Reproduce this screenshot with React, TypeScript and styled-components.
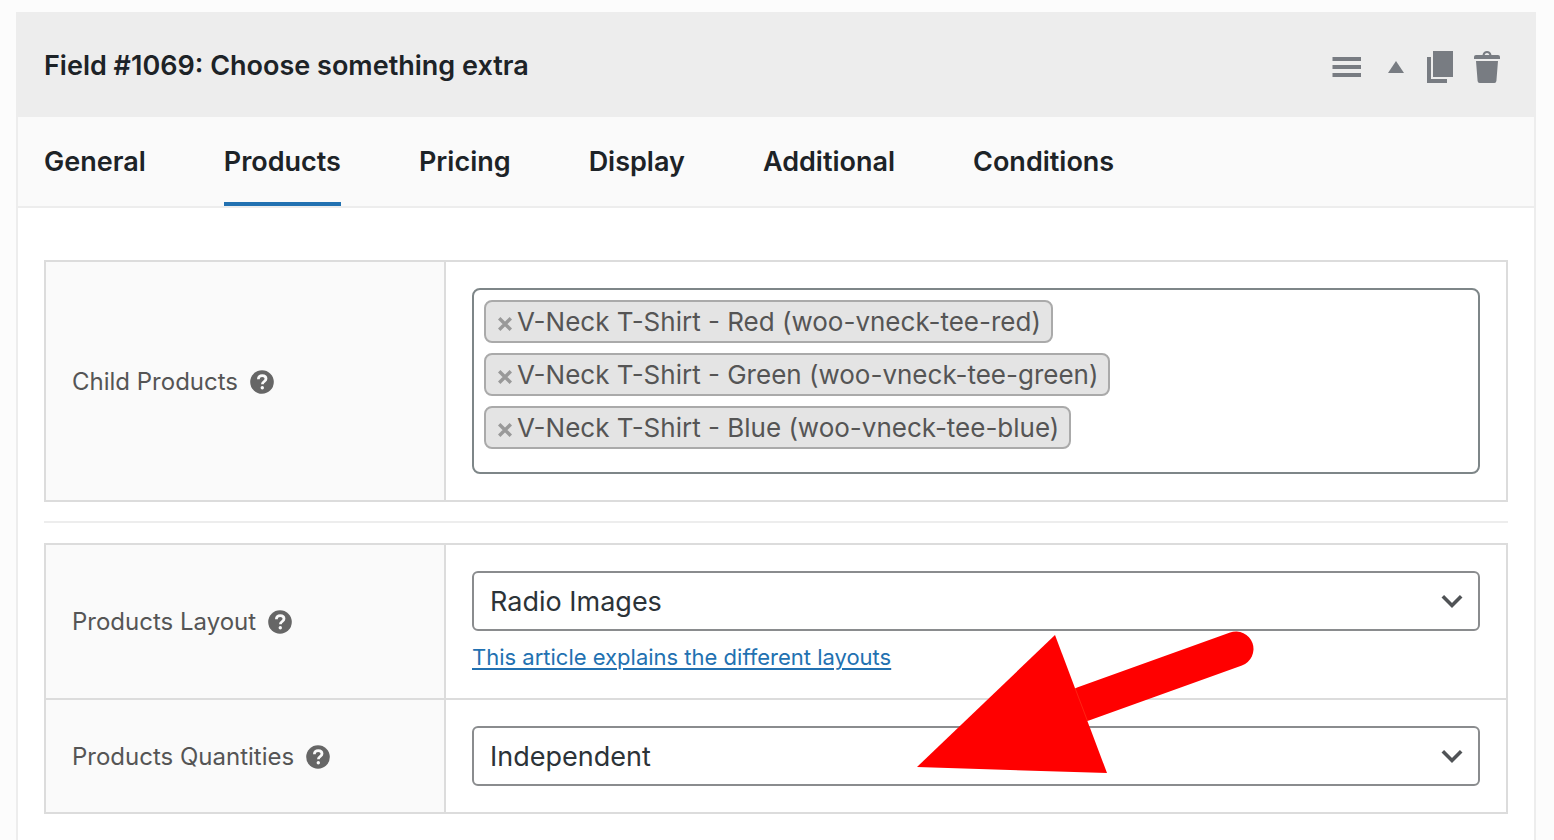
import React, { useState } from 'react';
import styled, { createGlobalStyle } from 'styled-components';

const GlobalStyle = createGlobalStyle`
  *, *::before, *::after { box-sizing: border-box; }
  body {
    margin: 0;
    background: #fcfcfc;
    color: #1d2327;
    font-family: Inter, "Liberation Sans", sans-serif;
  }
`;

const Panel = styled.section`
  display: flex;
  flex-direction: column;
  min-height: calc(100vh - 12px);
  margin: 12px 18px 0 16px;
  border: 2px solid #ededed;
  border-bottom: 0;
  background: #fff;
`;

const PanelHeader = styled.header`
  display: flex;
  align-items: center;
  justify-content: space-between;
  height: 103px;
  padding: 0 34px 0 26px;
  background: #ededed;
`;

const Title = styled.h2`
  margin: 0;
  font-size: 27px;
  line-height: 32px;
  font-weight: 600;
`;

const Actions = styled.div`
  display: flex;
  align-items: center;
  padding-top: 2px;
  color: #787c82;
`;

const IconButton = styled.button<{ $gap?: number }>`
  display: flex;
  margin: 0 0 0 ${(p) => p.$gap ?? 0}px;
  padding: 0;
  border: 0;
  background: none;
  color: inherit;
  cursor: pointer;
  svg { display: block; fill: currentColor; }
`;

const TabBar = styled.div`
  display: flex;
  gap: 78px;
  height: 91px;
  padding: 0 26px;
  border-bottom: 2px solid #ededed;
  background: #fafafa;
`;

const Tab = styled.button<{ $active: boolean }>`
  height: 89px;
  padding: 4px 0 0;
  border: 0;
  border-bottom: 4px solid ${(p) => (p.$active ? '#2271b1' : 'transparent')};
  background: none;
  color: #1d2327;
  font-family: inherit;
  font-size: 27px;
  line-height: 32px;
  font-weight: 600;
  white-space: nowrap;
  cursor: pointer;
`;

const Body = styled.div`
  padding: 52px 26px 26px;
`;

const Group = styled.div`
  position: relative;
  border: 2px solid #dcdcdc;
`;

const Divider = styled.hr`
  height: 2px;
  margin: 19px 0 20px;
  border: 0;
  background: #ededed;
`;

const Row = styled.div`
  display: grid;
  grid-template-columns: 400px minmax(0, 1fr);
  & + & { border-top: 2px solid #dcdcdc; }
`;

const LabelCell = styled.div`
  display: flex;
  align-items: center;
  gap: 12px;
  padding: 1px 26px 0;
  border-right: 2px solid #dcdcdc;
  background: #fafafa;
  color: #555;
  font-size: 24px;
  line-height: 32px;
`;

const HelpButton = styled(IconButton)`
  color: #666;
`;

const FieldCell = styled.div`
  padding: 26px;
`;

const TagBox = styled.ul`
  display: flex;
  flex-direction: column;
  align-items: flex-start;
  gap: 10px;
  min-height: 186px;
  margin: 0;
  padding: 10px;
  border: 2px solid #7e8688;
  border-radius: 8px;
  list-style: none;
`;

const Tag = styled.li`
  display: flex;
  align-items: center;
  gap: 5px;
  height: 43px;
  padding: 0 10px 0 12px;
  border: 2px solid #aaa;
  border-radius: 8px;
  background: #e4e4e4;
  color: #555;
  font-size: 26px;
  line-height: 32px;
  white-space: nowrap;
`;

const TagRemove = styled(IconButton)`
  padding-top: 4px;
  color: #999;
`;

const SelectWrap = styled.div`
  display: grid;
  align-items: center;
  & > * { grid-area: 1 / 1; }
  svg { justify-self: end; margin-right: 16px; pointer-events: none; }
`;

const Select = styled.select`
  appearance: none;
  width: 100%;
  height: 60px;
  padding: 2px 48px 0 16px;
  border: 2px solid #8a8c8e;
  border-radius: 6px;
  background: #fff;
  color: #2c3338;
  font-family: inherit;
  font-size: 27px;
  line-height: 36px;
`;

const HelpLink = styled.a`
  display: block;
  width: fit-content;
  margin-top: 12px;
  color: #2271b1;
  font-size: 22px;
  line-height: 29px;
  text-underline-offset: 3px;
  text-decoration-thickness: 2px;
`;

const Pointer = styled.svg`
  position: absolute;
  right: 251px;
  bottom: 38px;
  pointer-events: none;
`;

const HelpIcon = () => (
  <svg width="24" height="24" viewBox="0 0 24 24" aria-hidden="true">
    <circle cx="12" cy="12" r="11.8" />
    <path d="M8.4 9.2c0-2.2 1.5-3.6 3.8-3.6s3.8 1.3 3.8 3.2c0 2.7-3.6 2.7-3.6 5.4" fill="none" stroke="#fafafa" strokeWidth="2.8" />
    <circle cx="12.3" cy="17.7" r="1.7" fill="#fafafa" />
  </svg>
);

const Chevron = () => (
  <svg width="24" height="16" viewBox="0 0 24 16" aria-hidden="true">
    <path d="M2.8 3.2 12 12.4l9.2-9.2" fill="none" stroke="#505356" strokeWidth="3.6" />
  </svg>
);

const RemoveIcon = () => (
  <svg width="14" height="14" viewBox="0 0 14 14" aria-hidden="true">
    <path d="M1.2 1.2 12.8 12.8M12.8 1.2 1.2 12.8" stroke="currentColor" strokeWidth="3.4" />
  </svg>
);

const tabs = ['General', 'Products', 'Pricing', 'Display', 'Additional', 'Conditions'];

const initialProducts = [
  'V-Neck T-Shirt - Red (woo-vneck-tee-red)',
  'V-Neck T-Shirt - Green (woo-vneck-tee-green)',
  'V-Neck T-Shirt - Blue (woo-vneck-tee-blue)',
];

function FieldLabel({ text, htmlFor, id }: { text: string; htmlFor?: string; id?: string }) {
  return (
    <LabelCell>
      {htmlFor ? <label htmlFor={htmlFor}>{text}</label> : <span id={id}>{text}</span>}
      <HelpButton type="button" aria-label={`Help: ${text}`}>
        <HelpIcon />
      </HelpButton>
    </LabelCell>
  );
}

function Dropdown({ id, options }: { id: string; options: string[] }) {
  return (
    <SelectWrap>
      <Select id={id} defaultValue={options[0]}>
        {options.map((o) => (
          <option key={o}>{o}</option>
        ))}
      </Select>
      <Chevron />
    </SelectWrap>
  );
}

export default function App() {
  const [active, setActive] = useState('Products');
  const [products, setProducts] = useState(initialProducts);

  return (
    <>
      <GlobalStyle />
      <Panel>
        <PanelHeader>
          <Title>Field #1069: Choose something extra</Title>
          <Actions>
            <IconButton type="button" aria-label="Reorder field">
              <svg width="30" height="20" viewBox="0 0 30 20">
                <path d="M0.5 0h28.5v4H0.5zM0.5 8h28.5v4H0.5zM0.5 16h28.5v4H0.5z" />
              </svg>
            </IconButton>
            <IconButton type="button" aria-label="Collapse field" $gap={26}>
              <svg width="16" height="12" viewBox="0 0 16 12">
                <path d="M8 0l8 12H0z" />
              </svg>
            </IconButton>
            <IconButton type="button" aria-label="Duplicate field" $gap={23}>
              <svg width="26" height="32" viewBox="0 0 26 32">
                <path d="M6 0h20v26H6zM0 6h4v22h16v4H0z" />
              </svg>
            </IconButton>
            <IconButton type="button" aria-label="Delete field" $gap={21}>
              <svg width="26" height="32" viewBox="0 0 26 32">
                <path d="M2 4h6.5C9 1.6 10.6 0 13 0s4 1.6 4.5 4H24q2 0 2 2v2H0V6q0-2 2-2zM10.6 4h4.8C15 2.700 14.200 2 13 2s-2 .7-2.400 2zM2 10h22l-1.600 20q-.2 2-2 2H5.600q-1.800 0-2-2z" />
              </svg>
            </IconButton>
          </Actions>
        </PanelHeader>

        <TabBar role="tablist">
          {tabs.map((t) => (
            <Tab
              key={t}
              type="button"
              role="tab"
              aria-selected={t === active}
              $active={t === active}
              onClick={() => setActive(t)}
            >
              {t}
            </Tab>
          ))}
        </TabBar>

        <Body>
          <Group>
            <Row>
              <FieldLabel text="Child Products" id="child-products" />
              <FieldCell>
                <TagBox aria-labelledby="child-products">
                  {products.map((p) => (
                    <Tag key={p}>
                      <TagRemove
                        type="button"
                        aria-label={`Remove ${p}`}
                        onClick={() => setProducts(products.filter((x) => x !== p))}
                      >
                        <RemoveIcon />
                      </TagRemove>
                      {p}
                    </Tag>
                  ))}
                </TagBox>
              </FieldCell>
            </Row>
          </Group>

          <Divider />

          <Group>
            <Row>
              <FieldLabel text="Products Layout" htmlFor="products-layout" />
              <FieldCell>
                <Dropdown id="products-layout" options={['Radio Images', 'Checkboxes', 'Column', 'Select']} />
                <HelpLink href="#layouts">This article explains the different layouts</HelpLink>
              </FieldCell>
            </Row>
            <Row>
              <FieldLabel text="Products Quantities" htmlFor="products-quantities" />
              <FieldCell>
                <Dropdown id="products-quantities" options={['Independent', 'Linked', 'One only']} />
              </FieldCell>
            </Row>
            <Pointer width="338" height="143" viewBox="917 631 338 143" aria-hidden="true">
              <path d="M1083 704 1236 649" stroke="#f00" strokeWidth="35" strokeLinecap="round" />
              <path d="M917 767 1055 635 1107 773z" fill="#f00" />
              <path d="M1075 688 1087.5 721" stroke="#ff3b20" strokeWidth="0.6" />
            </Pointer>
          </Group>
        </Body>
      </Panel>
    </>
  );
}
